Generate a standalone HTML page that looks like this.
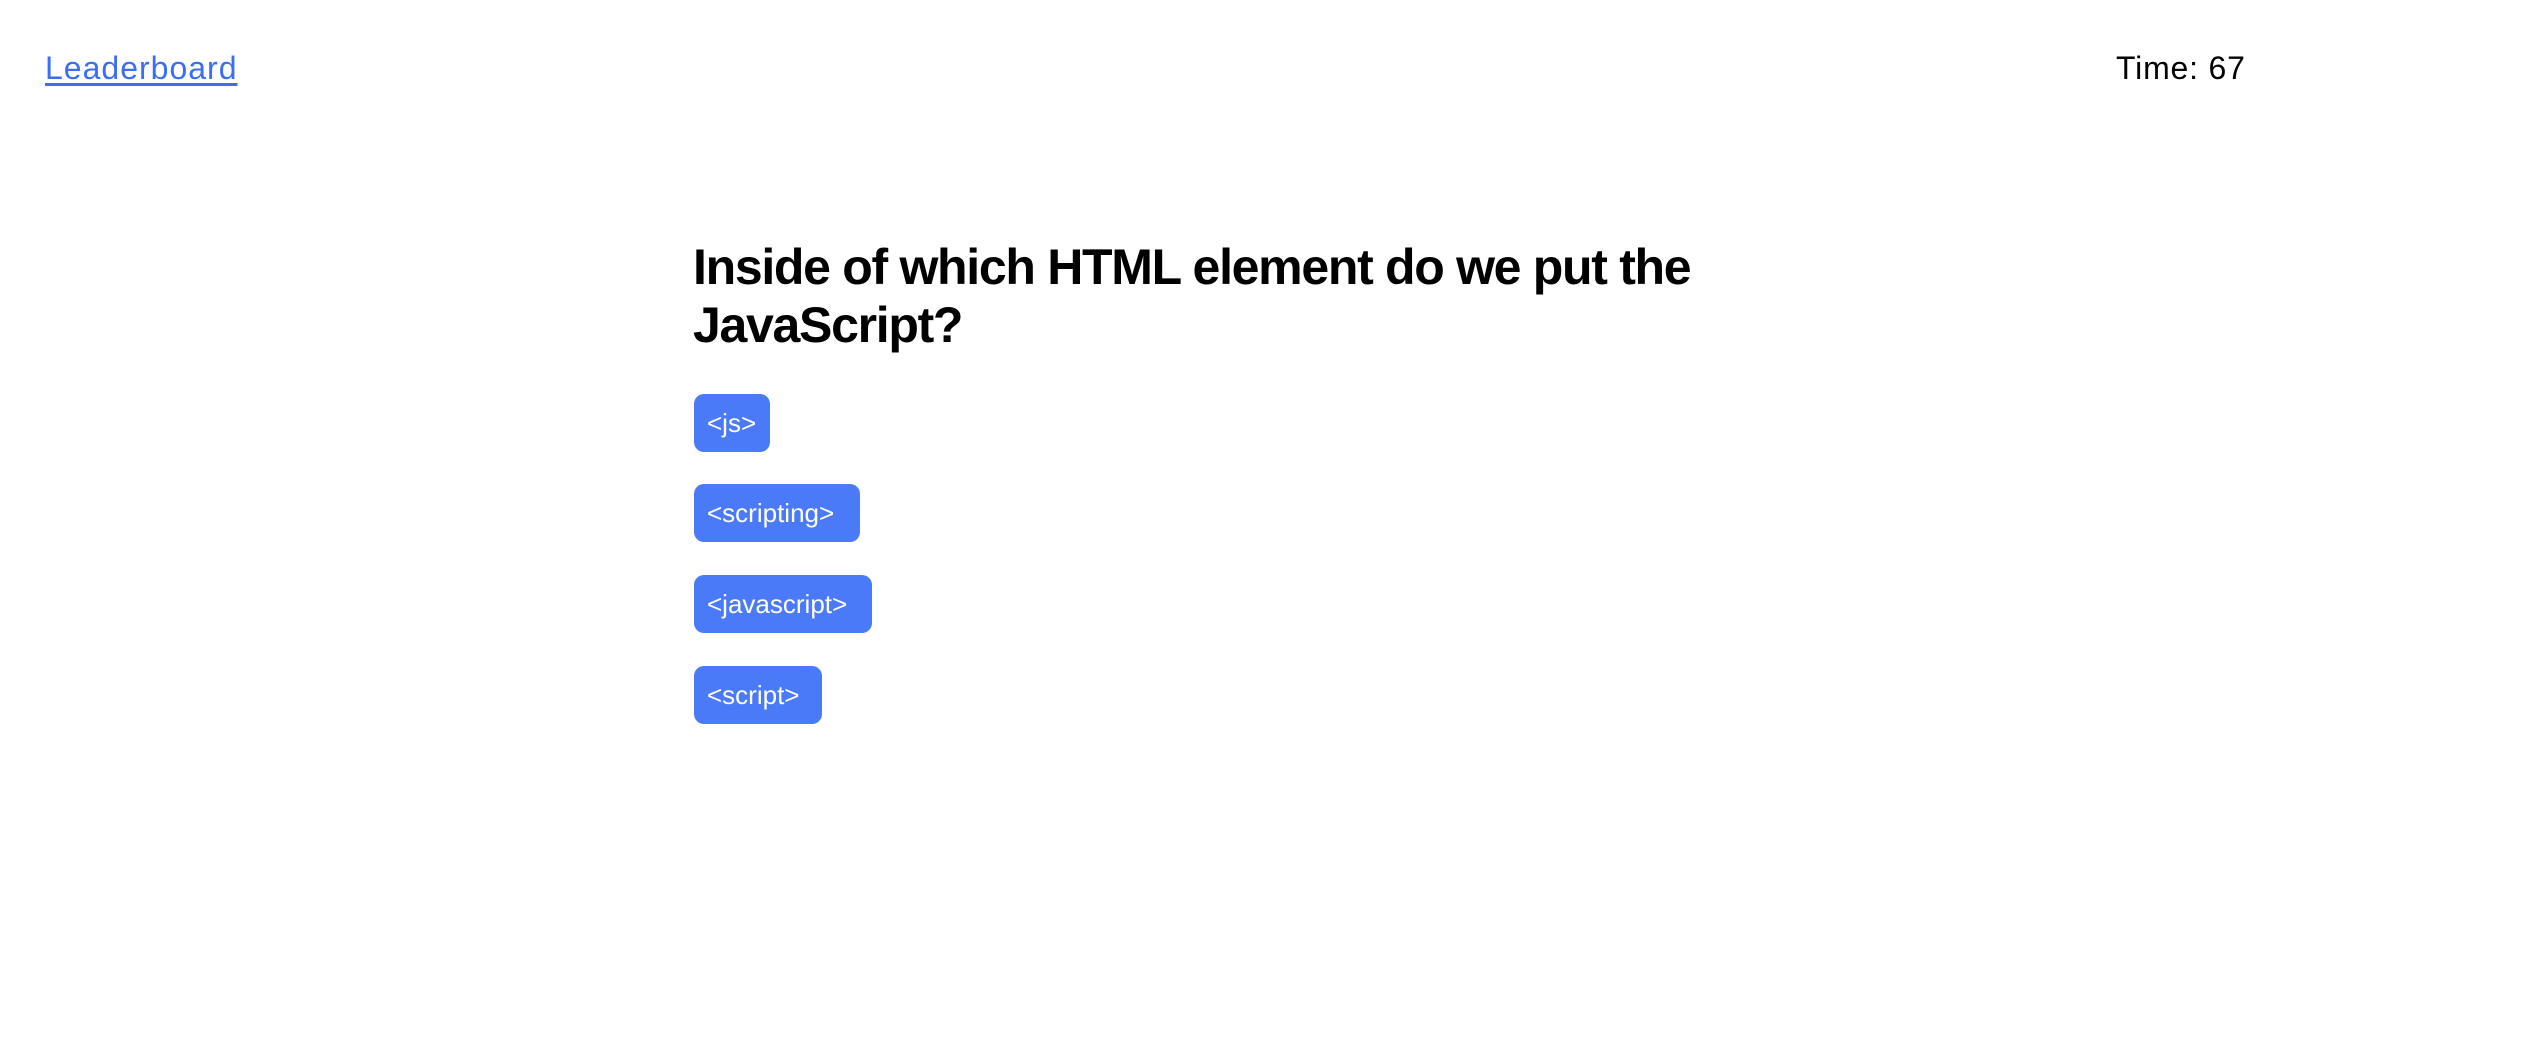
<!DOCTYPE html>
<html><head><meta charset="utf-8"><style>
html,body{margin:0;padding:0;background:#fff;width:2538px;height:1062px;overflow:hidden;font-family:"Liberation Sans",sans-serif;}
.lb{position:absolute;left:45px;top:50px;font-size:32px;color:#3b6ef5;text-decoration:underline;text-underline-offset:4px;letter-spacing:1px;}
.time{position:absolute;left:2116px;top:50px;font-size:32px;color:#000;letter-spacing:0.8px;}
h1{position:absolute;left:693px;top:238px;margin:0;width:1060px;font-size:50px;line-height:58px;font-weight:bold;letter-spacing:-1.3px;color:#000;}
.b{position:absolute;left:694px;height:58px;line-height:58px;padding:0 13px;background:#4a7af7;color:#fff;font-size:26px;border-radius:10px;box-sizing:border-box;}
</style></head><body>
<a class="lb">Leaderboard</a>
<div class="time">Time: 67</div>
<h1>Inside of which HTML element do we put the JavaScript?</h1>
<div class="b" style="top:394px;width:76px">&lt;js&gt;</div>
<div class="b" style="top:484px;width:166px">&lt;scripting&gt;</div>
<div class="b" style="top:575px;width:178px">&lt;javascript&gt;</div>
<div class="b" style="top:666px;width:128px">&lt;script&gt;</div>
</body></html>
